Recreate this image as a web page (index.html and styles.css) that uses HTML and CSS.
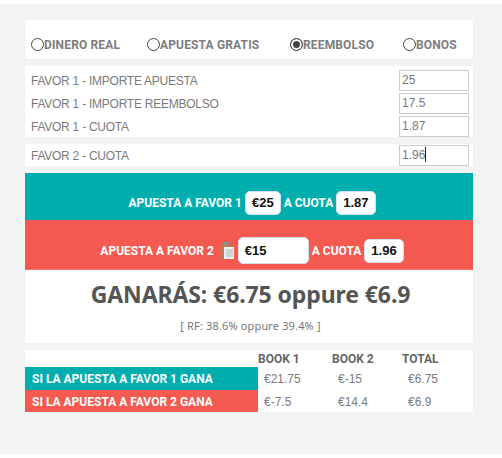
FILE: index.html
```html
<!DOCTYPE html>
<html lang="en">
<head>
    <meta charset="UTF-8">
    <meta name="viewport" content="width=device-width, initial-scale=1.0">
    <title>Calculadora</title>
    <link rel="stylesheet" href="styles.css">
</head>
<body>
    <div class="background">
        <div class="panel modes">
            <label class="mode mode1"><input type="radio" name="mode" class="radio">DINERO REAL</label>
            <label class="mode mode2"><input type="radio" name="mode" class="radio">APUESTA GRATIS</label>
            <label class="mode mode3"><input type="radio" name="mode" class="radio" checked>REEMBOLSO</label>
            <label class="mode"><input type="radio" name="mode" class="radio">BONOS</label>
        </div>

        <div class="panel fields">
            <div class="fieldRow">
                <span class="fieldLabel">FAVOR 1 - IMPORTE APUESTA</span>
                <div class="field">25</div>
            </div>
            <div class="fieldRow">
                <span class="fieldLabel">FAVOR 1 - IMPORTE REEMBOLSO</span>
                <div class="field">17.5</div>
            </div>
            <div class="fieldRow">
                <span class="fieldLabel">FAVOR 1 - CUOTA</span>
                <div class="field">1.87</div>
            </div>
        </div>

        <div class="panel fields single">
            <div class="fieldRow">
                <span class="fieldLabel">FAVOR 2 - CUOTA</span>
                <div class="field">1.96<span class="caret"></span></div>
            </div>
        </div>

        <div class="betBanner teal">
            <span>APUESTA A FAVOR 1</span>
            <span class="chip">€25</span>
            <span>A CUOTA</span>
            <span class="chip">1.87</span>
        </div>
        <div class="betBanner red">
            <span>APUESTA A FAVOR 2</span>
            <svg class="clipIcon" width="13" height="17" viewBox="0 0 13 17">
                <rect x="0" y="2" width="11" height="15" rx="1" fill="#b5824f"/>
                <rect x="3" y="5" width="10" height="12" fill="#eef0f0"/>
                <path d="M5 8h7M5 10h7M5 12h7M5 14h7" stroke="#b4b8b8" stroke-width="1"/>
                <rect x="3" y="0" width="5" height="3" fill="#8d8f8c"/>
            </svg>
            <span class="chip wide">€15</span>
            <span>A CUOTA</span>
            <span class="chip">1.96</span>
        </div>

        <div class="panel result">
            <div class="resultTitle">GANARÁS: €6.75 oppure €6.9</div>
            <div class="resultNote">[ RF: 38.6% oppure 39.4% ]</div>
        </div>

        <div class="panel summary">
            <table class="summaryTable">
                <tr>
                    <th class="rowHead"></th>
                    <th class="colA">BOOK 1</th>
                    <th class="colB">BOOK 2</th>
                    <th>TOTAL</th>
                </tr>
                <tr class="rowOne">
                    <td class="rowHead teal">SI LA APUESTA A FAVOR 1 GANA</td>
                    <td>€21.75</td>
                    <td>€-15</td>
                    <td class="total">€6.75</td>
                </tr>
                <tr>
                    <td class="rowHead red">SI LA APUESTA A FAVOR 2 GANA</td>
                    <td>€-7.5</td>
                    <td>€14.4</td>
                    <td class="total">€6.9</td>
                </tr>
            </table>
        </div>
    </div>
</body>
</html>
```

FILE: styles.css
```css
body {
    margin: 0;
    padding: 0;
    background-color: white;
    font-family: "Liberation Sans", Arial, sans-serif;
    font-size: 12px;
    color: #7a7a7a;
}
.background {
    margin-top: 4px;
    height: 450px;
    box-sizing: border-box;
    padding: 16px 29px 0 25px;
    background-color: #f2f4f4;
}
.panel {
    background-color: white;
    box-shadow: 0 0 1px #e2e6e6;
}
.modes {
    display: flex;
    align-items: flex-end;
    height: 39px;
    box-sizing: border-box;
    padding: 0 0 7px 6px;
    margin-bottom: 7px;
    font-family: Roboto, sans-serif;
    letter-spacing: 0.15px;
}
.mode {
    display: flex;
    align-items: center;
    font-weight: bold;
    color: #7d7d7d;
    line-height: 14px;
}
.mode1 { width: 116px; }
.mode2 { width: 143px; }
.mode3 { width: 113px; }
.radio {
    appearance: none;
    width: 13px;
    height: 13px;
    margin: -2px 0 0 0;
    border: 1px solid #444;
    border-radius: 50%;
    background-color: white;
    box-sizing: border-box;
}
.radio:checked {
    background-color: #444;
    box-shadow: inset 0 0 0 2px white;
}
.fields {
    padding: 4px 4px 0 6px;
    height: 71px;
    box-sizing: border-box;
    margin-bottom: 7px;
}
.single {
    height: 22px;
    padding-top: 1px;
}
.fieldRow {
    display: flex;
    justify-content: space-between;
    align-items: center;
    height: 21px;
    margin-bottom: 2px;
}
.fieldLabel {
    color: #7a7a7a;
    letter-spacing: -0.25px;
}
.field {
    width: 70px;
    height: 21px;
    box-sizing: border-box;
    border: 1px solid #ccc;
    padding-left: 2px;
    line-height: 19px;
    color: #7a7a7a;
}
.caret {
    display: inline-block;
    width: 1px;
    height: 15px;
    background-color: #222;
    vertical-align: -3px;
}
.betBanner {
    display: flex;
    justify-content: center;
    align-items: center;
    gap: 3px;
    box-sizing: border-box;
    padding-left: 6px;
    font-family: Roboto, sans-serif;
    font-weight: bold;
    color: white;
}
.betBanner.teal {
    height: 47px;
    padding-top: 13px;
}
.betBanner.red {
    height: 50px;
    padding-top: 11px;
}
.teal {
    background-color: #00aeae;
}
.red {
    background-color: #f45a50;
}
.chip {
    min-width: 35px;
    height: 24px;
    box-sizing: border-box;
    padding: 0 6px;
    border: 1px solid #d3e0ea;
    border-radius: 5px;
    background-color: white;
    color: #111;
    font-family: "Liberation Sans", Arial, sans-serif;
    font-size: 13px;
    line-height: 22px;
    text-align: center;
}
.wide {
    width: 71px;
    height: 27px;
    line-height: 25px;
    text-align: left;
}
.clipIcon {
    margin: 0 1px 0 4px;
}
.result {
    height: 73px;
    box-sizing: border-box;
    padding-left: 3px;
    margin-bottom: 7px;
    text-align: center;
    font-family: "Noto Sans", sans-serif;
}
.resultTitle {
    padding-top: 8px;
    font-size: 23px;
    line-height: 32px;
    font-weight: bold;
    letter-spacing: -0.1px;
    color: #555;
}
.resultNote {
    padding-top: 8px;
    font-size: 11px;
    line-height: 15px;
    letter-spacing: 0.15px;
    color: #777;
}
.summary {
    height: 62px;
}
.summaryTable {
    border-collapse: collapse;
    width: 100%;
}
.summaryTable th {
    height: 17px;
    padding: 0;
    text-align: left;
    font-family: Roboto, sans-serif;
    color: #666;
}
.summaryTable td {
    height: 22px;
    box-sizing: border-box;
    padding: 1px 0 0 6px;
}
.rowOne td {
    height: 23px;
}
.summaryTable td.rowHead {
    width: 233px;
    padding-left: 7px;
    font-family: Roboto, sans-serif;
    font-weight: bold;
    color: white;
}
.summaryTable .rowHead {
    width: 233px;
}
.colA {
    width: 74px;
}
.colB {
    width: 70px;
}
.summaryTable td.total {
    padding-left: 6px;
}
```
